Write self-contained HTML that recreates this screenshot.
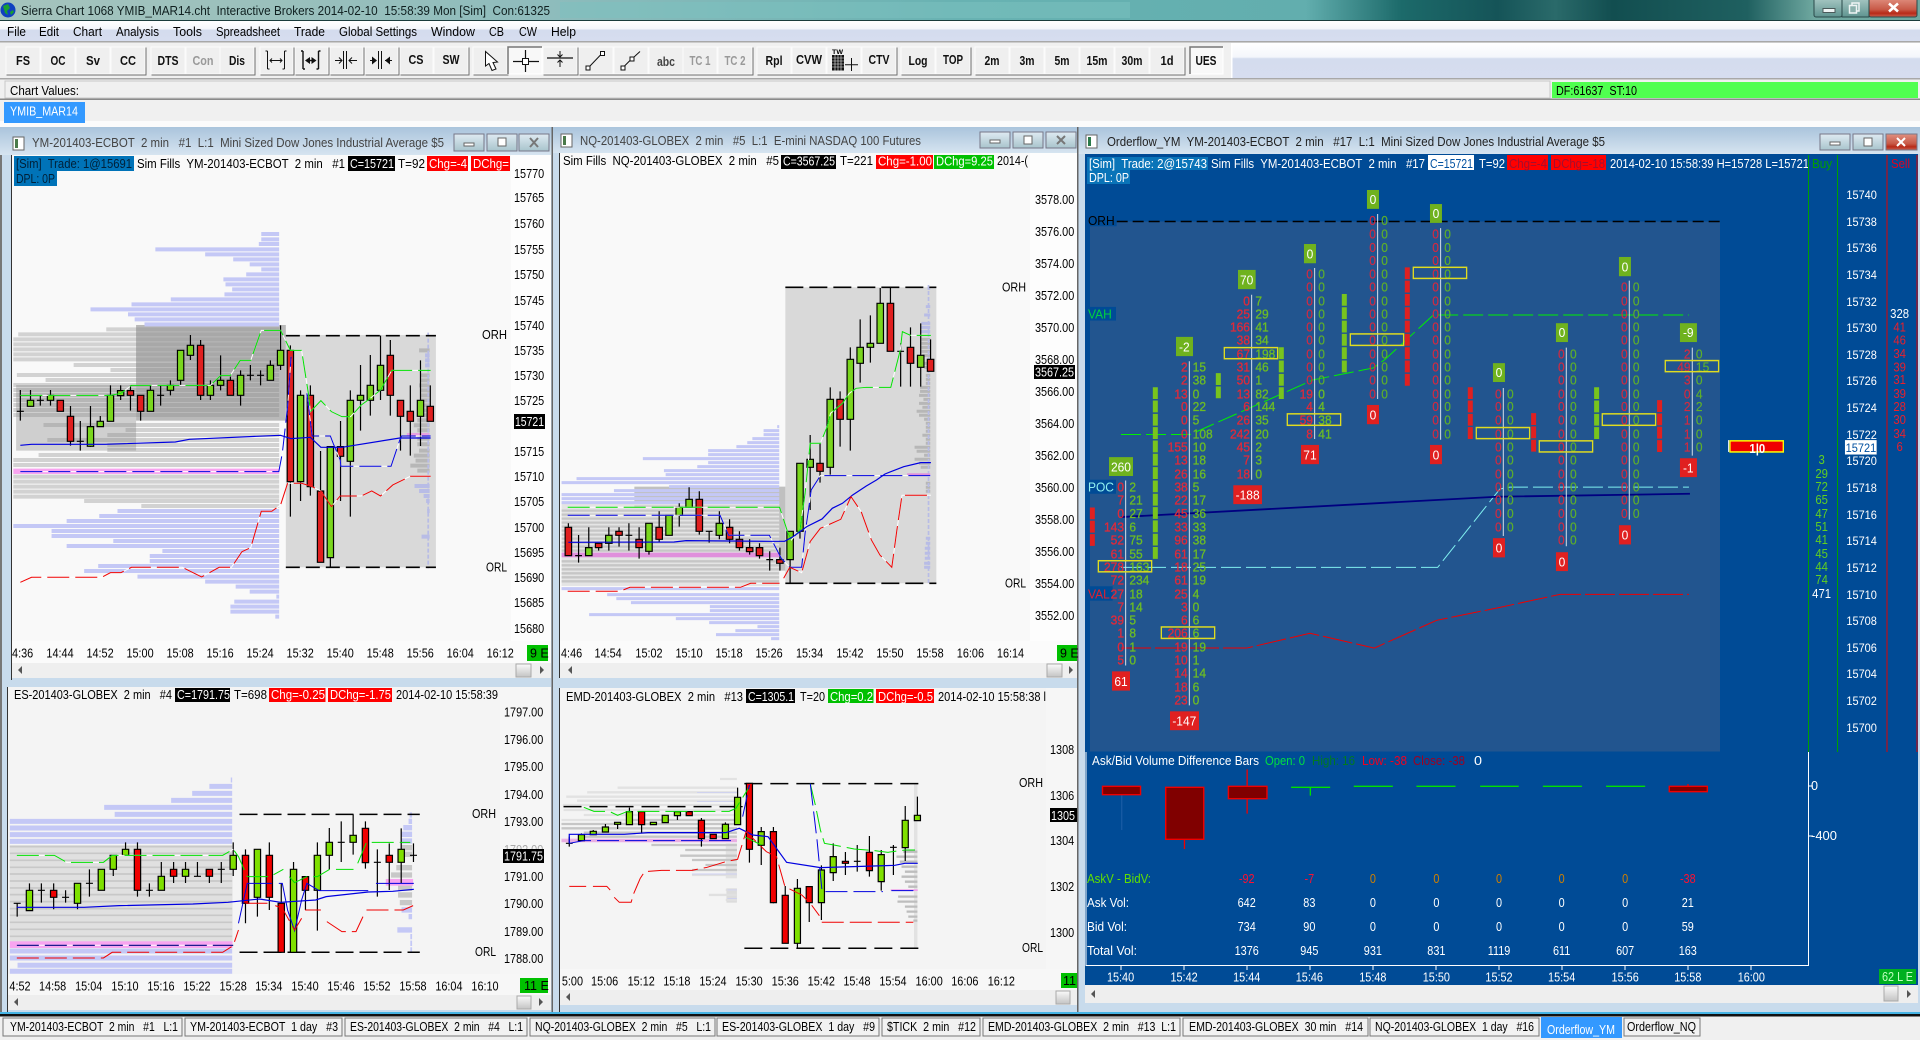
<!DOCTYPE html>
<html lang="en"><head><meta charset="utf-8"><title>Sierra Chart</title>
<style>
html,body{margin:0;padding:0;width:1920px;height:1040px;overflow:hidden;background:#e8eef6}
svg{display:block;font-family:"Liberation Sans",Arial,sans-serif}
text{white-space:pre;font-size:12.5px;fill:#000}
.n{vector-effect:non-scaling-stroke;fill:none}
.c{vector-effect:non-scaling-stroke;stroke:#000;stroke-width:1.2}
.m{text-anchor:middle}
.b text,.b{font-weight:bold;text-anchor:middle;font-size:12.5px;fill:#111}
.w{fill:#fff}
.f text{font-size:36px}
.fr text{fill:#e02a3a;stroke:#e02a3a;stroke-width:.9px;text-anchor:end}
.fg text{fill:#6cbc24;stroke:#6cbc24;stroke-width:.9px;text-anchor:start}
.fz text{fill:#d42a40;stroke:#d42a40;stroke-width:.5px}
.fy text{fill:#5eb02a;stroke:#5eb02a;stroke-width:.5px}
.d text{fill:#fff;font-size:36px;text-anchor:middle}
.ax text{fill:#fff;font-size:33px;text-anchor:middle}
.bt{filter:drop-shadow(1px 1px 0 #6e6e6e)}
</style></head><body>
<svg width="1920" height="1040" viewBox="0 0 1920 1040" xmlns="http://www.w3.org/2000/svg">
<defs>
<linearGradient id="tb" x1="0" x2="1" y1="0" y2="0"><stop offset="0" stop-color="#a5c4bd"/><stop offset=".28" stop-color="#8fbcbc"/><stop offset=".5" stop-color="#68b2b2"/><stop offset=".68" stop-color="#62aeae"/><stop offset=".73" stop-color="#1c6a6a"/><stop offset=".78" stop-color="#155458"/><stop offset=".81" stop-color="#2a6a6a"/><stop offset=".84" stop-color="#124e50"/><stop offset=".91" stop-color="#1f6060"/><stop offset=".945" stop-color="#6fa8a0"/><stop offset="1" stop-color="#6fa8a0"/></linearGradient>
<linearGradient id="mb" x1="0" x2="0" y1="0" y2="1"><stop offset="0" stop-color="#fff"/><stop offset=".4" stop-color="#f4f6fb"/><stop offset=".45" stop-color="#d4dcee"/><stop offset="1" stop-color="#d6ddef"/></linearGradient>
<linearGradient id="wt" x1="0" x2="0" y1="0" y2="1"><stop offset="0" stop-color="#aac4dc"/><stop offset="1" stop-color="#d6e4f0"/></linearGradient>
<linearGradient id="th" x1="0" x2="0" y1="0" y2="1"><stop offset="0" stop-color="#fafafa"/><stop offset="1" stop-color="#c4c4c4"/></linearGradient>
<linearGradient id="cl" x1="0" x2="0" y1="0" y2="1"><stop offset="0" stop-color="#e09080"/><stop offset=".6" stop-color="#c85a48"/><stop offset=".8" stop-color="#b82a18"/><stop offset="1" stop-color="#c86050"/></linearGradient>
<linearGradient id="wb" x1="0" x2="0" y1="0" y2="1"><stop offset="0" stop-color="#dfeaf2"/><stop offset="1" stop-color="#a8c4cc"/></linearGradient>
<linearGradient id="wg" x1="0" x2="0" y1="0" y2="1"><stop offset="0" stop-color="#a8c8c4"/><stop offset="1" stop-color="#5f9490"/></linearGradient>
</defs>

<!-- Base -->
<rect width="1920" height="1040" fill="#f0f0f0"/>
<rect width="1920" height="20" fill="url(#tb)"/>
<rect x="560" y="2" width="570" height="16" fill="#7cc2c0" opacity=".5"/>
<rect y="20" width="1920" height="1.2" fill="#1a3c3c"/>
<circle cx="8" cy="10" r="7.5" fill="#1040c0"/><path d="M3 6l5-2 2 4-3 3 1 4-3-2zM10 12l3-2 1 2-3 3z" fill="#18a030"/>
<text x="21" y="15" textLength="529" lengthAdjust="spacingAndGlyphs" style="fill:#102020">Sierra Chart 1068 YMIB_MAR14.cht  Interactive Brokers 2014-02-10  15:58:39 Mon [Sim]  Con:61325</text>
<g stroke="#2a4a4a"><rect x="1814" y="-2" width="28" height="19" rx="2" fill="url(#wg)"/><rect x="1842" y="-2" width="27" height="19" fill="url(#wg)"/><rect x="1869" y="-2" width="48" height="19" rx="2" fill="url(#cl)"/></g>
<rect x="1823" y="8.5" width="12" height="4" fill="#eef4f4" stroke="#4a5a5a"/><rect x="1852" y="3" width="7" height="8" fill="none" stroke="#eef4f4" stroke-width="1.5"/><rect x="1849.5" y="5.5" width="7" height="7.5" fill="#8ab0ac" stroke="#eef4f4" stroke-width="1.5"/><path d="M1889 3.5l9 8m0-8l-9 8" stroke="#fff" stroke-width="2.6"/>

<!-- Menu -->
<rect y="21" width="1920" height="20" fill="url(#mb)"/>
<rect y="41" width="1920" height="1.5" fill="#a8a8a8"/>
<g>
<text x="7" y="36" textLength="19" lengthAdjust="spacingAndGlyphs">File</text><text x="39" y="36" textLength="20" lengthAdjust="spacingAndGlyphs">Edit</text><text x="73" y="36" textLength="29" lengthAdjust="spacingAndGlyphs">Chart</text><text x="116" y="36" textLength="43" lengthAdjust="spacingAndGlyphs">Analysis</text><text x="173" y="36" textLength="29" lengthAdjust="spacingAndGlyphs">Tools</text><text x="216" y="36" textLength="64" lengthAdjust="spacingAndGlyphs">Spreadsheet</text><text x="294" y="36" textLength="31" lengthAdjust="spacingAndGlyphs">Trade</text><text x="339" y="36" textLength="78" lengthAdjust="spacingAndGlyphs">Global Settings</text><text x="431" y="36" textLength="44" lengthAdjust="spacingAndGlyphs">Window</text><text x="489" y="36" textLength="15" lengthAdjust="spacingAndGlyphs">CB</text><text x="519" y="36" textLength="18" lengthAdjust="spacingAndGlyphs">CW</text><text x="551" y="36" textLength="25" lengthAdjust="spacingAndGlyphs">Help</text>
</g>

<!-- Toolbar -->
<rect y="43" width="1920" height="35" fill="url(#mb)"/>
<rect x="0" y="43" width="1231" height="35" fill="#f0f0f0"/>
<rect x="1231" y="43" width="1.5" height="35" fill="#fff"/>
<rect y="78" width="1920" height="1.5" fill="#a8a8a8"/>
<g class="bt" fill="#efefef" stroke="#fbfbfb">
<rect x="6" y="47" width="34" height="27"/><rect x="41" y="47" width="34" height="27"/><rect x="76" y="47" width="34" height="27"/><rect x="111" y="47" width="34" height="27"/>
<rect x="151" y="47" width="34" height="27"/><rect x="186" y="47" width="34" height="27"/><rect x="220" y="47" width="34" height="27"/>
<rect x="260" y="47" width="33" height="27"/><rect x="295" y="47" width="33" height="27"/><rect x="330" y="47" width="33" height="27"/><rect x="365" y="47" width="33" height="27"/><rect x="400" y="47" width="33" height="27"/><rect x="434" y="47" width="34" height="27"/>
<rect x="473" y="47" width="34" height="27"/><rect x="543" y="47" width="34" height="27"/><rect x="579" y="47" width="34" height="27"/><rect x="614" y="47" width="34" height="27"/><rect x="649" y="47" width="34" height="27"/><rect x="683" y="47" width="34" height="27"/><rect x="718" y="47" width="34" height="27"/>
<rect x="757" y="47" width="34" height="27"/><rect x="792" y="47" width="34" height="27"/><rect x="827" y="47" width="34" height="27"/><rect x="862" y="47" width="34" height="27"/><rect x="901" y="47" width="34" height="27"/><rect x="936" y="47" width="34" height="27"/>
<rect x="975" y="47" width="34" height="27"/><rect x="1010" y="47" width="34" height="27"/><rect x="1045" y="47" width="34" height="27"/><rect x="1080" y="47" width="34" height="27"/><rect x="1115" y="47" width="34" height="27"/><rect x="1150" y="47" width="34" height="27"/>
</g>
<rect x="508" y="47" width="34" height="27" fill="#f8f8f8" stroke="#fff"/><path d="M508 74V47H542" fill="none" stroke="#777" stroke-width="1.5"/>
<rect x="1190" y="47" width="33" height="27" fill="#f8f8f8" stroke="#fff"/><path d="M1190 74V47H1223" fill="none" stroke="#777" stroke-width="1.5"/>
<g class="b">
<text x="23" y="65" textLength="14" lengthAdjust="spacingAndGlyphs">FS</text><text x="58" y="65" textLength="15" lengthAdjust="spacingAndGlyphs">OC</text><text x="93" y="65" textLength="14" lengthAdjust="spacingAndGlyphs">Sv</text><text x="128" y="65" textLength="16" lengthAdjust="spacingAndGlyphs">CC</text><text x="168" y="65" textLength="21" lengthAdjust="spacingAndGlyphs">DTS</text><text x="203" y="65" textLength="21" lengthAdjust="spacingAndGlyphs" style="fill:#999">Con</text><text x="237" y="65" textLength="16" lengthAdjust="spacingAndGlyphs">Dis</text><text x="416" y="64" textLength="15" lengthAdjust="spacingAndGlyphs">CS</text><text x="451" y="64" textLength="17" lengthAdjust="spacingAndGlyphs">SW</text><text x="666" y="66" textLength="18" lengthAdjust="spacingAndGlyphs" style="fill:#444">abc</text><text x="700" y="65" textLength="21" lengthAdjust="spacingAndGlyphs" style="fill:#999">TC 1</text><text x="735" y="65" textLength="21" lengthAdjust="spacingAndGlyphs" style="fill:#999">TC 2</text><text x="774" y="65" textLength="17" lengthAdjust="spacingAndGlyphs">Rpl</text><text x="809" y="64" textLength="26" lengthAdjust="spacingAndGlyphs">CVW</text><text x="879" y="64" textLength="21" lengthAdjust="spacingAndGlyphs">CTV</text><text x="918" y="65" textLength="19" lengthAdjust="spacingAndGlyphs">Log</text><text x="953" y="64" textLength="20" lengthAdjust="spacingAndGlyphs">TOP</text><text x="992" y="65" textLength="15" lengthAdjust="spacingAndGlyphs">2m</text><text x="1027" y="65" textLength="15" lengthAdjust="spacingAndGlyphs">3m</text><text x="1062" y="65" textLength="15" lengthAdjust="spacingAndGlyphs">5m</text><text x="1097" y="65" textLength="21" lengthAdjust="spacingAndGlyphs">15m</text><text x="1132" y="65" textLength="21" lengthAdjust="spacingAndGlyphs">30m</text><text x="1167" y="65" textLength="13" lengthAdjust="spacingAndGlyphs">1d</text><text x="1206" y="65" textLength="21" lengthAdjust="spacingAndGlyphs">UES</text>
</g>
<g fill="none" stroke="#111" stroke-width="1">
<path d="M267.5 51V69M265.5 51h2M267.5 69h2M284.5 51V69M284.5 51h2M282.5 69h2M270 60.5H282M272 58.5l-2 2 2 2M280 58.5l2 2-2 2"/>
<path d="M303 51V69M301 51h2M303 69h2M318.5 51V69M318.5 51h2M316.5 69h2" stroke-width="1.4"/><path d="M305 60.5l5-3.5v7zM316.5 60.5l-5-3.5v7z" fill="#111" stroke="none"/><path d="M309 60.5h4" stroke-width="1.4"/>
<path d="M343.5 51V69M346.5 51V69M335 60.5H342M339 57.5l3 3-3 3M349 60.5H357M352 57.5l-3 3 3 3"/>
<path d="M378.5 51V69M381.5 51V69M370 60.5H373M385 60.5H392"/><path d="M372 56.5l5 4-5 4zM390 56.5l-5 4 5 4z" fill="#111" stroke="none"/>
<path d="M485.5 51.5V66L489 63.5 492 70.5 496 69 493 62.5 497.5 62Z" fill="#fff"/>
<path d="M525.5 50V72M513 61.5H539" stroke-width="1.2"/><rect x="522.5" y="58.5" width="6" height="6" fill="#fff"/>
<path d="M547 58H573" stroke-width="1.2"/><path d="M560 51V56.5M557.5 54.5l2.5 2.5 2.5-2.5M560 60V67M557.5 62.5l2.5-2.5 2.5 2.5"/>
<path d="M590 66L600.5 55"/><rect x="586" y="66" width="4" height="4" fill="#fff"/><rect x="600.5" y="51.5" width="4" height="4" fill="#fff"/>
<path d="M624.5 66L630 60.5M633.5 57.5L640 51.5"/><rect x="621" y="66" width="4" height="4" fill="#fff"/><rect x="630" y="57" width="4" height="4" fill="#fff"/>
</g>
<rect x="832" y="55" width="12" height="15.5" fill="#111"/>
<path d="M835 55v15.5M838 55v15.5M841 55v15.5M832 58h12M832 61h12M832 64h12M832 67h12" stroke="#eee" stroke-width=".6"/>
<path d="M845 64.7H858M851.5 58V71" stroke="#111" fill="none"/>
<text x="832" y="54" style="font-size:6.5px;font-weight:bold" textLength="11" lengthAdjust="spacingAndGlyphs">TW</text>

<!-- Status -->
<rect x="5" y="81" width="1545" height="17" fill="#f0f0f0" stroke="#c8c8c8"/>
<text x="10" y="95" textLength="69" lengthAdjust="spacingAndGlyphs">Chart Values:</text>
<rect x="1552" y="82" width="366" height="16" fill="#50ff50"/>
<text x="1556" y="95" textLength="81" lengthAdjust="spacingAndGlyphs">DF:61637  ST:10</text>
<rect y="98.5" width="1920" height="1.5" fill="#8a8a8a"/>
<rect y="100" width="1920" height="22" fill="#f0f0f0"/>
<rect y="121" width="1920" height="6" fill="#fbfbfb"/>
<rect x="4" y="102" width="81" height="21" fill="#3399ff"/>
<text x="10" y="115.5" textLength="68" lengthAdjust="spacingAndGlyphs" class="w">YMIB_MAR14</text>

<!-- Window frames -->
<rect y="127" width="1920" height="890" fill="#c8dbec"/>
<rect x="0" y="127" width="2" height="890" fill="#777"/>
<rect x="0" y="127" width="552" height="28" fill="url(#wt)"/>
<rect x="553" y="127" width="524" height="26" fill="url(#wt)"/>
<rect x="1078" y="127" width="842" height="27" fill="url(#wt)"/>
<rect x="551.5" y="127" width="1.5" height="890" fill="#666"/>
<rect x="1077" y="127" width="1.5" height="890" fill="#666"/>

<rect x="13" y="137" width="11" height="13" fill="#fff" stroke="#666"/><rect x="15" y="139" width="3" height="9" fill="#4a7a4a"/>
<text x="32" y="147" textLength="412" lengthAdjust="spacingAndGlyphs" style="fill:#444">YM-201403-ECBOT  2 min   #1  L:1  Mini Sized Dow Jones Industrial Average $5</text>
<g fill="url(#wb)" stroke="#778"><rect x="454" y="134" width="30" height="17"/><rect x="487" y="134" width="30" height="17"/><rect x="519" y="134" width="30" height="17"/></g>
<rect x="464" y="143" width="10" height="3" fill="#fff" stroke="#666"/><rect x="498" y="138" width="8" height="8" fill="#fff" stroke="#666"/><path d="M530 138l8 9m0-9l-8 9" stroke="#777" stroke-width="2"/>

<rect x="561" y="134" width="11" height="13" fill="#fff" stroke="#666"/><rect x="563" y="136" width="3" height="9" fill="#4a7a4a"/>
<text x="580" y="145" textLength="341" lengthAdjust="spacingAndGlyphs" style="fill:#444">NQ-201403-GLOBEX  2 min   #5  L:1  E-mini NASDAQ 100 Futures</text>
<g fill="url(#wb)" stroke="#778"><rect x="980" y="132" width="30" height="16"/><rect x="1013" y="132" width="30" height="16"/><rect x="1046" y="132" width="30" height="16"/></g>
<rect x="990" y="140" width="10" height="3" fill="#fff" stroke="#666"/><rect x="1024" y="136" width="8" height="8" fill="#fff" stroke="#666"/><path d="M1057 136l8 8m0-8l-8 8" stroke="#777" stroke-width="2"/>

<rect x="1086" y="135" width="11" height="13" fill="#fff" stroke="#666"/><rect x="1088" y="137" width="3" height="9" fill="#2a7a4a"/>
<text x="1107" y="146" textLength="498" lengthAdjust="spacingAndGlyphs" style="fill:#222">Orderflow_YM  YM-201403-ECBOT  2 min   #17  L:1  Mini Sized Dow Jones Industrial Average $5</text>
<g stroke="#778"><rect x="1820" y="134" width="30" height="16" fill="url(#wb)"/><rect x="1853" y="134" width="30" height="16" fill="url(#wb)"/><rect x="1886" y="134" width="31" height="16" fill="url(#cl)"/></g>
<rect x="1830" y="142" width="10" height="3" fill="#fff" stroke="#666"/><rect x="1864" y="138" width="8" height="8" fill="#fff" stroke="#666"/><path d="M1897 138l8 8m0-8l-8 8" stroke="#fff" stroke-width="2"/>

<!-- CHART 1 -->
<rect x="11" y="155" width="1" height="525" fill="#333"/>
<rect x="12" y="155" width="539" height="486" fill="#f9f9f9"/>
<rect x="511" y="155" width="40" height="486" fill="#fdfdfd"/>
<rect x="12" y="641" width="539" height="22" fill="#fbfbfb"/>
<rect x="12" y="663" width="539" height="15" fill="#efefef"/>
<rect x="516" y="664" width="15" height="13" fill="url(#th)" stroke="#aaa"/>
<path d="M22 666l-4 4 4 4zM540 666l4 4-4 4z" fill="#555"/>
<rect x="14" y="156" width="120" height="15" fill="#0073b8"/><rect x="14" y="171" width="43" height="15" fill="#0073b8"/>
<text x="16" y="168" textLength="116" lengthAdjust="spacingAndGlyphs" style="fill:#002038">[Sim]  Trade: 1@15691</text>
<text x="16" y="183" textLength="39" lengthAdjust="spacingAndGlyphs" style="fill:#002038">DPL: 0P</text>
<text x="137" y="168" textLength="208" lengthAdjust="spacingAndGlyphs">Sim Fills  YM-201403-ECBOT  2 min   #1</text>
<rect x="348" y="156" width="47" height="15" fill="#000"/><text x="350" y="168" textLength="44" lengthAdjust="spacingAndGlyphs" class="w">C=15721</text>
<text x="398" y="168" textLength="27" lengthAdjust="spacingAndGlyphs">T=92</text>
<rect x="427" y="156" width="41" height="15" fill="#f00"/><text x="429" y="168" textLength="38" lengthAdjust="spacingAndGlyphs" class="w">Chg=-4</text>
<rect x="471" y="156" width="39" height="15" fill="#f00"/><text x="473" y="168" textLength="36" lengthAdjust="spacingAndGlyphs" class="w">DChg=</text>

<g transform="translate(0,200) scale(.3507,.3333)">
<rect x="815" y="405" width="428" height="697" fill="#d9d9d9"/>
<rect x="388" y="375" width="427" height="287" fill="#b9b9b9"/>
<rect x="46" y="555" width="342" height="197" fill="#cfcfcf"/>
<path stroke="#c4c8f6" stroke-width="12" d="M745 102H796M745 118H796M738 132H796M443 148H796M585 163H796M665 178H796M712 193H796M745 208H796M702 223H796M637 238H796M643 253H796M662 268H796M640 283H796M487 298H796M375 313H796M258 328H796M365 343H796M384 358H796M412 373H796M335 933H796M283 948H796M190 963H796M38 978H796M147 993H796M147 1008H796M323 1023H796M190 1038H796M463 1053H796M427 1068H796M427 1083H796M280 1098H796M240 1113H796M392 1130H796M585 1145H796M672 1160H796M712 1175H796M788 1190H796M668 1205H796M657 1220H796M657 1235H796M785 1250H796"/>
<path stroke="#888" stroke-opacity=".34" stroke-width="12" d="M303 388H796M52 403H796M38 418H796M38 433H796M38 448H796M38 463H796M38 478H796M210 495H796M315 510H796M48 525H796M130 540H796M38 555H796M38 570H796M38 585H796M38 600H796M38 615H796M38 630H796M38 645H796M124 675H796M358 690H796M306 705H796M135 720H796M306 735H796M306 750H796M110 765H796M38 780H796M38 795H796M38 830H796M38 845H796M38 860H796M38 875H796M38 890H796M240 903H796M403 918H796"/>
<rect x="38" y="806" width="758" height="16" fill="#f8a4f0"/>
<path stroke="#9a9a9a" stroke-opacity=".55" stroke-width="12" d="M1195 451H1225M1200 526H1225M1200 541H1225M1195 556H1225M1198 571H1225M1200 586H1225M1198 601H1225M1195 616H1225M1195 631H1225M1198 646H1225M1190 661H1225M1180 676H1225M1190 691H1225M1190 716H1225M1190 733H1225M1195 752H1225M1180 767H1225M1185 782H1225M1170 797H1225M1190 812H1225"/>
<path stroke="#b8bce6" stroke-width="12" d="M1212 466H1225M1212 481H1225M1212 496H1225M1182 858H1225M1195 873H1225M1208 888H1225M1215 903H1225M1218 933H1225M1202 1010H1225"/>
<rect x="1160" y="699" width="65" height="9" fill="#e8a0e0"/>
<path stroke="#b8bce6" stroke-width="5" stroke-dasharray="12 6" d="M1221 398V1105"/>
<path class="n" stroke="#000" stroke-width="1.6" stroke-dasharray="14 6" d="M815 407H1243M815 1102H1243"/>
<path class="n" stroke="#000" stroke-width="1.2" d="M58 570V662M48 634H68M87 570V620M115 587V617M105 601H125M144 570V617M172 601V634M201 618V737M229 663V752M219 724H239M258 618V741M286 648V680M315 556V664M344 556V600M372 556V632M401 586V662M429 556V634M458 556V617M448 586H468M486 541V586M515 451V556M543 405V480M572 420V600M600 541V600M629 466V571M657 530V586M686 511V617M714 495V541M704 526H724M743 511V556M733 526H753M771 481V541M800 376V510M828 436V950M857 571V903M885 556V887M914 753V1087M942 740V1102M971 663V903M999 571V950M1028 495V692M1056 465V647M1085 407V600M1113 420V647M1142 601V752M1170 556V767M1199 481V738M1227 556V664"/>
<path class="c" d="M78 601h18v18h-18zM135 586h18v15h-18zM249 680h18v59h-18zM277 664h18v16h-18zM306 586h18v78h-18zM335 572h18v15h-18zM420 571h18v63h-18zM477 556h18v15h-18zM506 451h18v90h-18zM534 436h18v30h-18zM591 556h18v30h-18zM620 541h18v15h-18zM677 526h18v60h-18zM762 496h18v45h-18zM791 451h18v45h-18zM848 586h18v259h-18zM933 740h18v333h-18zM990 601h18v183h-18zM1019 586h18v15h-18zM1047 556h18v45h-18zM1076 496h18v75h-18zM1190 601h18v48h-18z" style="fill:#7ad61e"/>
<path class="c" d="M163 601h18v33h-18zM192 649h18v75h-18zM363 572h18v14h-18zM392 586h18v48h-18zM563 436h18v150h-18zM648 541h18v45h-18zM819 451h18v394h-18zM876 586h18v274h-18zM905 873h18v214h-18zM962 740h18v29h-18zM1104 466h18v120h-18zM1133 601h18v48h-18zM1161 634h18v30h-18zM1218 619h18v45h-18z" style="fill:#e02020"/>
<path class="n" stroke="#fff" stroke-width="1" d="M58 586H315L345 580 375 556H600L630 526H657L685 481H715L745 391H800L828 451H860L880 585 885 635 915 602 945 635 975 650H1000L1030 615 1050 600 1085 570 1117 511H1228M58 815H795L805 760 820 620 830 470M875 580L890 708H942L950 730 970 780 972 799H1115L1140 720 1145 708H1228M58 1147L90 1132H290L315 1118H345L375 1102H520L575 1131 625 1102H660L690 1055 715 1043 745 934H775L800 915 820 850H860L890 860 915 873 945 920 970 888H1030L1060 873 1085 888 1120 855 1170 829H1228"/>
<path class="n" stroke="#00e000" stroke-width="1" stroke-dasharray="22 6" d="M58 586H315L345 580 375 556H600L630 526H657L685 481H715L745 391H800L828 451H860L880 585 885 635 915 602 945 635 975 650H1000L1030 615 1050 600 1085 570 1117 511H1228"/>
<path class="n" stroke="#0000e0" stroke-width="1.2" d="M58 736L90 733H300L500 726 540 718 730 709 800 706 830 716 885 712 915 742H975L1140 714H1228"/>
<path class="n" stroke="#0000e0" stroke-width="1" stroke-dasharray="22 6" d="M58 815H795L805 760 820 620 830 470M875 580L890 708H942L950 730 970 780 972 799H1115L1140 720 1145 708H1228"/>
<path class="n" stroke="#f00000" stroke-width="1" stroke-dasharray="22 6" d="M58 1147L90 1132H290L315 1118H345L375 1102H520L575 1131 625 1102H660L690 1055 715 1043 745 934H775L800 915 820 850H860L890 860 915 873 945 920 970 888H1030L1060 873 1085 888 1120 855 1170 829H1228"/>
</g>
<text x="482" y="339" textLength="25" lengthAdjust="spacingAndGlyphs">ORH</text><text x="486" y="571.5" textLength="21" lengthAdjust="spacingAndGlyphs">ORL</text>
<g transform="translate(514,0) scale(.87,1)"><text y="178">15770</text><text y="202">15765</text><text y="228">15760</text><text y="254">15755</text><text y="279">15750</text><text y="305">15745</text><text y="330">15740</text><text y="355">15735</text><text y="380">15730</text><text y="405">15725</text><text y="426">15720</text><text y="456">15715</text><text y="481">15710</text><text y="506">15705</text><text y="532">15700</text><text y="557">15695</text><text y="582">15690</text><text y="607">15685</text><text y="633">15680</text></g>
<rect x="514" y="414" width="31" height="15" fill="#000"/><text x="515" y="426" textLength="29" lengthAdjust="spacingAndGlyphs" class="w">15721</text>
<g transform="scale(.87,1)" class="m"><text x="26" y="657.5" class="m">4:36</text><text x="69" y="657.5" class="m">14:44</text><text x="115" y="657.5" class="m">14:52</text><text x="161" y="657.5" class="m">15:00</text><text x="207" y="657.5" class="m">15:08</text><text x="253" y="657.5" class="m">15:16</text><text x="299" y="657.5" class="m">15:24</text><text x="345" y="657.5" class="m">15:32</text><text x="391" y="657.5" class="m">15:40</text><text x="437" y="657.5" class="m">15:48</text><text x="483" y="657.5" class="m">15:56</text><text x="529" y="657.5" class="m">16:04</text><text x="575" y="657.5" class="m">16:12</text></g>
<rect x="527" y="645" width="21" height="16" fill="#00c000"/><text x="530" y="657.5">9 E</text>

<!-- CHART 2 -->
<rect x="559" y="153" width="1" height="525" fill="#333"/>
<rect x="560" y="153" width="517" height="488" fill="#f9f9f9"/>
<rect x="1030" y="153" width="47" height="488" fill="#fdfdfd"/>
<rect x="560" y="641" width="517" height="22" fill="#fbfbfb"/>
<rect x="560" y="663" width="517" height="15" fill="#efefef"/>
<rect x="1047" y="664" width="15" height="13" fill="url(#th)" stroke="#aaa"/>
<path d="M572 666l-4 4 4 4zM1069 666l4 4-4 4z" fill="#555"/>
<text x="563" y="165" textLength="216" lengthAdjust="spacingAndGlyphs">Sim Fills  NQ-201403-GLOBEX  2 min   #5</text>
<rect x="781" y="155" width="55" height="14" fill="#000"/><text x="783" y="165.5" textLength="52" lengthAdjust="spacingAndGlyphs" class="w">C=3567.25</text>
<text x="840" y="165" textLength="33" lengthAdjust="spacingAndGlyphs">T=221</text>
<rect x="876" y="155" width="57" height="14" fill="#f00"/><text x="878" y="165.5" textLength="54" lengthAdjust="spacingAndGlyphs" class="w">Chg=-1.00</text>
<rect x="934" y="155" width="60" height="14" fill="#00c000"/><text x="936" y="165.5" textLength="57" lengthAdjust="spacingAndGlyphs" class="w">DChg=9.25</text>
<text x="997" y="165" textLength="31" lengthAdjust="spacingAndGlyphs">2014-(</text>

<g transform="translate(550,200) scale(.3401,.3333)">
<rect x="692" y="262" width="444" height="888" fill="#d9d9d9"/>
<rect x="248" y="860" width="444" height="252" fill="#c0c0c0"/>
<rect x="34" y="908" width="640" height="250" fill="#e4e4e4"/>
<path stroke="#c4c8f6" stroke-width="9" d="M668 680H674M628 692H674M628 704H674M595 716H674M580 728H674M548 740H674M465 752H674M465 764H674M273 776H674M465 788H674M433 800H674M335 812H674M340 824H674M78 836H674M34 848H674M350 860H674M188 872H674M34 884H674M34 896H674M34 908H674M34 1166H674M168 1184H674M195 1196H674M238 1208H674M470 1220H674M470 1232H674M115 1244H674M370 1256H674M468 1268H674M610 1280H674M545 1292H674M488 1304H674M650 1316H674"/>
<path stroke="#888" stroke-opacity=".32" stroke-width="7" d="M248 920H674M34 932H674M34 944H674M34 956H674M34 968H674M34 980H674M34 992H674M34 1004H674M34 1016H674M34 1028H674M34 1040H674M34 1052H674M34 1084H674M34 1096H674M34 1108H674M34 1120H674M34 1132H674M34 1144H674"/>
<rect x="34" y="1058" width="640" height="14" fill="#e090dc"/>
<path stroke="#9a9a9a" stroke-opacity=".55" stroke-width="9" d="M1092 418H1118M1092 430H1118M1092 442H1118M1092 454H1118M1095 466H1118M1100 490H1118M1100 502H1118M1105 526H1118M1105 538H1118M1105 550H1118M1088 562H1118M1088 574H1118M1085 586H1118M1098 598H1118M1085 610H1118M1095 622H1118M1078 634H1118M1085 646H1118M1100 658H1118M1105 670H1118M1105 682H1118M1105 694H1118M1095 706H1118M1105 718H1118M1105 730H1118M1072 742H1118M1078 754H1118M1100 766H1118M1072 778H1118M1085 790H1118M1090 802H1118M1105 850H1118M1105 862H1118M1105 874H1118"/>
<path stroke="#b8bce6" stroke-width="9" d="M1110 265H1118M1105 320H1118M1100 345H1118M1092 370H1118M1090 382H1118M1090 395H1118M1105 1015H1118M1105 1030H1118M1102 1045H1118M1102 1060H1118M1102 1075H1118M1100 1090H1118M1100 1102H1118"/>
<path stroke="#b8bce6" stroke-width="5" stroke-dasharray="12 6" d="M1113 255V1155"/>
<rect x="1050" y="820" width="68" height="8" fill="#e090dc"/>
<path class="n" stroke="#000" stroke-width="1.6" stroke-dasharray="18 6" d="M692 262H1136M692 1150H1136"/>
<path class="n" stroke="#000" stroke-width="1.2" d="M54 970V1067M84 1005V1088M74 1067H94M114 982V1067M143 1030V1052M173 982V1052M203 982V1040M232 970V1052M222 1006H242M262 982V1076M291 970V1064M321 934V1026M350 946V1006M380 910V980M409 862V922M439 874V1004M468 994V1028M458 994H478M498 934V1018M528 958V1030M557 994V1052M587 1018V1064M616 1030V1076M646 1054V1112M636 1079H656M676 1043V1112M706 994V1150M735 790V1016M765 705V930M794 730V848M824 562V824M853 574V740M883 442V752M912 358V548M942 346V488M971 264V430M1001 264V454M1031 430V560M1021 454H1041M1060 382V560M1090 370V560M1119 418V514"/>
<path class="c" d="M104.5 1043h19v24h-19zM163.5 1006h19v24h-19zM281.5 970h19v84h-19zM340.5 946h19v60h-19zM370.5 922h19v24h-19zM399.5 898h19v24h-19zM488.5 970h19v36h-19zM696.5 994h19v85h-19zM725.5 790h19v204h-19zM755.5 778h19v24h-19zM814.5 598h19v204h-19zM873.5 478h19v180h-19zM902.5 442h19v48h-19zM932.5 430h19v12h-19zM961.5 310h19v120h-19zM1080.5 466h19v36h-19z" style="fill:#7ad61e"/>
<path class="c" d="M44.5 982h19v85h-19zM133.5 1030h19v13h-19zM193.5 994h19v12h-19zM252.5 1018h19v25h-19zM311.5 982h19v36h-19zM429.5 898h19v96h-19zM518.5 982h19v36h-19zM547.5 1018h19v25h-19zM577.5 1043h19v12h-19zM606.5 1043h19v24h-19zM666.5 1079h19v11h-19zM784.5 790h19v24h-19zM843.5 598h19v60h-19zM991.5 310h19v144h-19zM1050.5 442h19v48h-19zM1109.5 478h19v36h-19z" style="fill:#e02020"/>
<path class="n" stroke="#fff" stroke-width="1" d="M52 922H675L700 1000 710 1020 735 990 750 880 765 730H795L815 680 825 640 860 610 880 580 900 565 930 562H1002L1030 450 1036 395 1060 406H1120M52 946H500L525 1006H645L680 1075 705 1102H740L750 1000 760 930 768 870 795 827H1120M52 1174H205L235 1162H560L590 1150H675M687 1135L705 1102 740 1118 765 1025 795 985 855 958 885 890 915 935 945 1020 970 1065 1005 1102 1020 990 1035 886H1120"/>
<path class="n" stroke="#00e000" stroke-width="1" stroke-dasharray="22 6" d="M52 922H675L700 1000 710 1020 735 990 750 880 765 730H795L815 680 825 640 860 610 880 580 900 565 930 562H1002L1030 450 1036 395 1060 406H1120"/>
<path class="n" stroke="#0000e0" stroke-width="1" stroke-dasharray="22 6" d="M52 946H500L525 1006H645L680 1075 705 1102H740L750 1000 760 930 768 870 795 827H1120"/>
<path class="n" stroke="#0000e0" stroke-width="1.2" d="M54 1027L365 1026 400 1022 650 1024H690L715 1010 755 980 800 957 830 925 860 910 890 885 930 858 960 840 985 822 1040 800 1090 788H1120"/>
<path class="n" stroke="#f00000" stroke-width="1" stroke-dasharray="22 6" d="M52 1174H205L235 1162H560L590 1150H675M687 1135L705 1102 740 1118 765 1025 795 985 855 958 885 890 915 935 945 1020 970 1065 1005 1102 1020 990 1035 886H1120"/>
</g>
<text x="1002" y="291.5" textLength="24" lengthAdjust="spacingAndGlyphs">ORH</text><text x="1005" y="587.5" textLength="21" lengthAdjust="spacingAndGlyphs">ORL</text>
<g transform="translate(1035,0) scale(.87,1)"><text y="204">3578.00</text><text y="236">3576.00</text><text y="268">3574.00</text><text y="300">3572.00</text><text y="332">3570.00</text><text y="364">3568.00</text><text y="396">3566.00</text><text y="428">3564.00</text><text y="460">3562.00</text><text y="492">3560.00</text><text y="524">3558.00</text><text y="556">3556.00</text><text y="588">3554.00</text><text y="620">3552.00</text></g>
<rect x="1034" y="365" width="41" height="14" fill="#000"/><text x="1035" y="376.5" textLength="39" lengthAdjust="spacingAndGlyphs" class="w">3567.25</text>
<g transform="scale(.87,1)" class="m"><text x="657" y="657.5" class="m">4:46</text><text x="699" y="657.5" class="m">14:54</text><text x="746" y="657.5" class="m">15:02</text><text x="792" y="657.5" class="m">15:10</text><text x="838" y="657.5" class="m">15:18</text><text x="884" y="657.5" class="m">15:26</text><text x="930.5" y="657.5" class="m">15:34</text><text x="977" y="657.5" class="m">15:42</text><text x="1023" y="657.5" class="m">15:50</text><text x="1069" y="657.5" class="m">15:58</text><text x="1115.4" y="657.5" class="m">16:06</text><text x="1161.5" y="657.5" class="m">16:14</text></g>
<rect x="1057" y="645" width="20" height="16" fill="#00c000"/><text x="1060" y="657.5">9 E</text>

<!-- CHART 3 -->
<rect x="7" y="687" width="1" height="328" fill="#333"/>
<rect x="8" y="687" width="543" height="287" fill="#f4f4f4"/>
<rect x="500" y="687" width="51" height="287" fill="#f6f6f6"/>
<rect x="8" y="974" width="543" height="21" fill="#f7f7f7"/>
<rect x="8" y="995" width="543" height="15" fill="#eee"/>
<rect x="517" y="996" width="14" height="13" fill="url(#th)" stroke="#aaa"/>
<path d="M18 998l-4 4 4 4zM539 998l4 4-4 4z" fill="#555"/>
<text x="14" y="699" textLength="158" lengthAdjust="spacingAndGlyphs">ES-201403-GLOBEX  2 min   #4</text>
<rect x="175" y="688" width="55" height="14" fill="#000"/><text x="177" y="699" textLength="53" lengthAdjust="spacingAndGlyphs" class="w">C=1791.75</text>
<text x="234" y="699" textLength="33" lengthAdjust="spacingAndGlyphs">T=698</text>
<rect x="269" y="688" width="56.5" height="14" fill="#f00"/><text x="271" y="699" textLength="54" lengthAdjust="spacingAndGlyphs" class="w">Chg=-0.25</text>
<rect x="328" y="688" width="64" height="14" fill="#f00"/><text x="330" y="699" textLength="61" lengthAdjust="spacingAndGlyphs" class="w">DChg=-1.75</text>
<text x="396" y="699" textLength="102" lengthAdjust="spacingAndGlyphs">2014-02-10 15:58:39</text>

<g transform="translate(0,680) scale(.3507,.3333)">
<path stroke="#c4c8f6" stroke-width="15" d="M658 300H662M597 319H662M548 340H662M488 361H662M297 382H662M327 403H662M28 424H662M28 444H662M28 464H662M28 484H662M28 813H662M28 834H662M50 856H662M28 874H662"/>
<rect x="28" y="495" width="635" height="290" fill="#e0e0e0"/>
<path stroke="#c8c8c8" stroke-width="5" d="M28 500H662M28 520H662M28 541H662M28 562H662M28 582H662M28 603H662M28 624H662M28 644H662M28 665H662M28 686H662M28 706H662M28 727H662M28 748H662M28 769H662"/>
<rect x="28" y="784" width="635" height="20" fill="#f8a4f0"/>
<path stroke="#c8c8c8" stroke-width="16" d="M1145 503H1175M1145 523H1175M1130 563H1175M1115 585H1175M1135 625H1175M1135 645H1175M1140 668H1175"/>
<path stroke="#c4c8f6" stroke-width="16" d="M1168 405H1175M1165 424H1175M1150 443H1175M1145 463H1175M1145 483H1175M1145 690H1175M1165 710H1175M1133 750H1175M1170 770H1175M1170 790H1175M1170 810H1175"/>
<rect x="1100" y="597" width="78" height="20" fill="#f8a4f0"/>
<path class="n" stroke="#000" stroke-width="1.5" stroke-dasharray="18 6" d="M683 403H1197M683 817H1197"/>
<path class="n" stroke="#000" stroke-width="1.2" d="M49 670V710M39 670H59M84 610V692M118 610V668M108 631H128M153 610V688M187 631V668M177 652H197M221 610V688M255 568V650M245 610H265M289 568V631M323 526V588M358 487V526M392 487V650M426 610V650M416 631H436M460 546V631M495 546V609M529 546V609M563 546V589M553 589H573M597 568V609M631 546V609M621 568H641M665 487V588M700 508V730M734 508V710M768 487V690M802 610V817M837 546V817M871 590V690M905 487V752M939 444V568M973 424V546M963 487H983M1007 403V524M1042 424V566M1076 508V650M1066 547H1086M1110 490V630M1144 445V610M1179 490V546M1169 526H1189"/>
<path class="c" d="M75 631h18v61h-18zM212 610h18v60h-18zM280 568h18v63h-18zM314 526h18v42h-18zM349 508h18v18h-18zM451 589h18v42h-18zM520 568h18v21h-18zM656 526h18v42h-18zM725 508h18v144h-18zM828 568h18v249h-18zM896 526h18v105h-18zM930 487h18v39h-18zM998 466h18v21h-18zM1135 508h18v39h-18z" style="fill:#7fe000"/>
<path class="c" d="M144 631h18v21h-18zM383 508h18v123h-18zM486 568h18v21h-18zM588 568h18v21h-18zM691 526h18v144h-18zM759 526h18v126h-18zM793 670h18v147h-18zM862 590h18v41h-18zM1033 445h18v103h-18zM1101 526h18v21h-18z" style="fill:#f00000"/>
<path class="n" stroke="#fff" stroke-width="1" d="M48 796H665M48 526H155L190 547H295L320 526H635L665 508"/>
<path class="n" stroke="#00e000" stroke-width="1" stroke-dasharray="22 6" d="M48 526H155L190 547H295L320 526H635L665 508 680 530 705 590H770L808 568M825 590L840 608 875 590H905L940 568M958 568H1008M1020 550L1045 487H1170"/>
<path class="n" stroke="#0000e0" stroke-width="1" d="M680 730L705 610H775M795 610H805L820 690 840 752 860 660 875 610 910 632H1050M1072 610H1180"/>
<path class="n" stroke="#0000e0" stroke-width="1.2" d="M48 682H240L340 677 550 672 650 667 740 657 800 667 900 660 930 650 1050 636 1120 634 1180 628"/>
<path class="n" stroke="#000080" stroke-width="1.2" stroke-dasharray="22 6" d="M48 796H665"/>
<path class="n" stroke="#f00000" stroke-width="1" stroke-dasharray="22 6" d="M48 834H295L320 817H635L665 797 680 750M700 670H770M785 677L805 685 840 750 860 715M870 690H915M932 725L975 755H1015L1035 710M1045 690H1150L1178 677"/>
</g>
<text x="472" y="818" textLength="24" lengthAdjust="spacingAndGlyphs">ORH</text><text x="475" y="956" textLength="21" lengthAdjust="spacingAndGlyphs">ORL</text>
<g transform="translate(504,0) scale(.87,1)"><text y="716.5">1797.00</text><text y="744">1796.00</text><text y="771">1795.00</text><text y="799">1794.00</text><text y="826">1793.00</text><text y="854" style="fill:#aaa">1792.00</text><text y="881">1791.00</text><text y="908">1790.00</text><text y="936">1789.00</text><text y="963">1788.00</text></g>
<rect x="503" y="849" width="41" height="14" fill="#000"/><text x="504" y="860.5" textLength="39" lengthAdjust="spacingAndGlyphs" class="w">1791.75</text>
<g transform="scale(.87,1)" class="m"><text x="23" y="990.5" class="m">4:52</text><text x="60.5" y="990.5" class="m">14:58</text><text x="102" y="990.5" class="m">15:04</text><text x="143.7" y="990.5" class="m">15:10</text><text x="185" y="990.5" class="m">15:16</text><text x="226.4" y="990.5" class="m">15:22</text><text x="268" y="990.5" class="m">15:28</text><text x="309" y="990.5" class="m">15:34</text><text x="350.6" y="990.5" class="m">15:40</text><text x="392" y="990.5" class="m">15:46</text><text x="433.3" y="990.5" class="m">15:52</text><text x="474.7" y="990.5" class="m">15:58</text><text x="516" y="990.5" class="m">16:04</text><text x="557.5" y="990.5" class="m">16:10</text></g>
<rect x="520" y="978" width="28" height="15" fill="#00c000"/><text x="524" y="990">11 E</text>

<!-- CHART 4 -->
<rect x="559" y="688" width="1" height="328" fill="#333"/>
<rect x="560" y="688" width="517" height="281" fill="#f4f4f4"/>
<rect x="1046" y="688" width="31" height="281" fill="#f6f6f6"/>
<rect x="560" y="969" width="517" height="21" fill="#f7f7f7"/>
<rect x="560" y="990" width="517" height="15" fill="#eee"/>
<rect x="1056" y="991" width="14" height="13" fill="url(#th)" stroke="#aaa"/>
<path d="M570 993l-4 4 4 4z" fill="#555"/>
<text x="566" y="701" textLength="177" lengthAdjust="spacingAndGlyphs">EMD-201403-GLOBEX  2 min   #13</text>
<rect x="746" y="689" width="49" height="14" fill="#000"/><text x="748" y="701" textLength="46" lengthAdjust="spacingAndGlyphs" class="w">C=1305.1</text>
<text x="800" y="701" textLength="25" lengthAdjust="spacingAndGlyphs">T=20</text>
<rect x="828" y="689" width="45.5" height="14" fill="#00c000"/><text x="830" y="701" textLength="43" lengthAdjust="spacingAndGlyphs" class="w">Chg=0.2</text>
<rect x="876" y="689" width="58" height="14" fill="#f00"/><text x="878" y="701" textLength="55" lengthAdjust="spacingAndGlyphs" class="w">DChg=-0.5</text>
<text x="938" y="701" textLength="108" lengthAdjust="spacingAndGlyphs">2014-02-10 15:58:38 l</text>

<g transform="translate(550,680) scale(.338,.3333)">
<rect x="520" y="490" width="33" height="105" fill="#e2e2e2"/><rect x="522" y="625" width="31" height="43" fill="#dcdcdc"/>
<path stroke="#e2e2e2" stroke-width="7" d="M503 297H553M200 323H553M110 337H553M48 350H553M80 362H553M38 375H553M40 390H553M100 405H553M34 420H553"/>
<path stroke="#c6c6c6" stroke-width="7" d="M240 420H553M34 432H553M34 445H553M100 458H553M100 470H553M34 482H553M300 495H553M400 510H553M385 527H553M420 540H553M460 555H553M420 570H553"/>
<path stroke="#e0e0e0" stroke-width="7" d="M420 585H553M520 630H553M470 645H553M520 660H553"/>
<path stroke="#c4c8f6" stroke-width="2" d="M435 338H553M435 365H553M420 582H553M525 630H553M525 655H553"/>
<rect x="34" y="476" width="519" height="11" fill="#f0a8e8" opacity=".8"/>
<rect x="1077" y="310" width="10" height="495" fill="#e2e2e2"/>
<path stroke="#bdbdbd" stroke-width="7" d="M1045 515H1087M1025 530H1087M1035 545H1087M1040 560H1087M1050 575H1087M1040 590H1087M1050 605H1087M1060 620H1087M1030 650H1087M1028 665H1087M1050 680H1087M1055 695H1087M1060 710H1087M1075 722H1087"/>
<rect x="1008" y="628" width="80" height="5" fill="#f0a0e8"/>
<path class="n" stroke="#000" stroke-width="1.5" stroke-dasharray="18 8" d="M575 311H1106M575 805H1106M40 380H575"/>
<path class="n" stroke="#000" stroke-width="1.2" d="M57 470V500M47 490H67M93 460V482M128 450V464M164 432V456M200 427V447M235 383V434M271 395V460M306 427V434M341 406V428M377 395V420M412 395V407M448 414V500M483 463V476M519 427V476M555 323V434M540 380H570M590 310V548M625 441V555M661 441V670M696 618V790M732 597V805M767 620V726M803 556V720M838 490V603M874 516V585M909 495V575M899 544H919M945 468V590M980 510V632M1016 495V585M1006 502H1026M1051 378V543M1087 350V406"/>
<path class="c" d="M84 464h18v18h-18zM119 454h18v10h-18zM155 441h18v15h-18zM191 427h18v6h-18zM226 395h18v39h-18zM297 427h18v7h-18zM332 406h18v22h-18zM368 395h18v12h-18zM510 433h18v43h-18zM546 352h18v82h-18zM616 455h18v41h-18zM723 625h18v165h-18zM794 570h18v98h-18zM829 530h18v48h-18zM971 524h18v81h-18zM1042 421h18v82h-18zM1078 406h18v16h-18z" style="fill:#7fe000"/>
<path class="c" d="M262 395h18v39h-18zM403 395h18v12h-18zM439 421h18v55h-18zM474 463h18v13h-18zM581 310h18v198h-18zM652 455h18v213h-18zM687 646h18v144h-18zM758 620h18v48h-18zM865 544h18v6h-18zM936 517h18v55h-18z" style="fill:#f00000"/>
<path class="n" stroke="#00e000" stroke-width="1" stroke-dasharray="22 6" d="M100 382L130 394H175L200 406 230 394H530L550 385 590 320M575 470L625 495M770 311L785 375 800 450 812 490 840 495 900 507 960 512 1000 517 1050 510H1080"/>
<path class="n" stroke="#0000e0" stroke-width="1.2" d="M57 490V463H220L290 458H520L560 445 600 465 645 470 700 547 800 563 1020 556 1050 550H1088"/>
<path class="n" stroke="#0000e0" stroke-width="1" stroke-dasharray="22 6" d="M57 490L100 482H550M570 410L590 315M770 311L790 480 805 635H985M1010 632H1088"/>
<path class="n" stroke="#f00000" stroke-width="1" stroke-dasharray="22 6" d="M57 619H107M127 619H168L178 630M190 652L205 667H240L248 640 267 595 280 575 330 571H420L465 562 520 545 555 538 580 455 640 515 670 530 695 620 745 645 770 670 797 707M804 727H1075"/>
</g>
<text x="1019" y="787" textLength="24" lengthAdjust="spacingAndGlyphs">ORH</text><text x="1022" y="952" textLength="21" lengthAdjust="spacingAndGlyphs">ORL</text>
<g transform="translate(1050,0) scale(.87,1)"><text y="754">1308</text><text y="800">1306</text><text y="845">1304</text><text y="891">1302</text><text y="937">1300</text></g>
<rect x="1050" y="808" width="27" height="14" fill="#000"/><text x="1051" y="820" textLength="24" lengthAdjust="spacingAndGlyphs" class="w">1305</text>
<g transform="scale(.87,1)" class="m"><text x="658" y="985.5" class="m">5:00</text><text x="695" y="985.5" class="m">15:06</text><text x="737" y="985.5" class="m">15:12</text><text x="778" y="985.5" class="m">15:18</text><text x="819.5" y="985.5" class="m">15:24</text><text x="861" y="985.5" class="m">15:30</text><text x="902.6" y="985.5" class="m">15:36</text><text x="944" y="985.5" class="m">15:42</text><text x="985" y="985.5" class="m">15:48</text><text x="1026.4" y="985.5" class="m">15:54</text><text x="1068" y="985.5" class="m">16:00</text><text x="1109" y="985.5" class="m">16:06</text><text x="1151" y="985.5" class="m">16:12</text></g>
<rect x="1061" y="973" width="16" height="15" fill="#00c000"/><text x="1063" y="985">11</text>

<!-- ORDERFLOW -->
<rect x="1085" y="154" width="833" height="831" fill="#004b96"/>
<rect x="1090" y="221.5" width="630" height="530" fill="#22558f"/>
<rect x="1087" y="157" width="121" height="13" fill="#0a74b8"/><rect x="1087" y="170" width="43" height="14" fill="#0a74b8"/>
<text x="1089" y="168" textLength="118" lengthAdjust="spacingAndGlyphs" class="w">[Sim]  Trade: 2@15743</text>
<text x="1089" y="182" textLength="40" lengthAdjust="spacingAndGlyphs" class="w">DPL: 0P</text>
<text x="1211" y="168" textLength="214" lengthAdjust="spacingAndGlyphs" class="w">Sim Fills  YM-201403-ECBOT  2 min   #17</text>
<rect x="1428" y="155" width="46" height="15" fill="#fff"/><text x="1430" y="168" textLength="43" lengthAdjust="spacingAndGlyphs" style="fill:#0050a0">C=15721</text>
<text x="1479" y="168" textLength="26" lengthAdjust="spacingAndGlyphs" class="w">T=92</text>
<rect x="1507" y="155" width="41" height="15" fill="#f00"/><text x="1509" y="168" textLength="38" lengthAdjust="spacingAndGlyphs" style="fill:#a01030">Chg=-4</text>
<rect x="1551" y="155" width="55" height="15" fill="#f00"/><text x="1553" y="168" textLength="52" lengthAdjust="spacingAndGlyphs" style="fill:#a01030">DChg=-18</text>
<text x="1610" y="168" textLength="199" lengthAdjust="spacingAndGlyphs" class="w">2014-02-10 15:58:39 H=15728 L=15721</text>
<text x="1812" y="168" textLength="20" lengthAdjust="spacingAndGlyphs" style="fill:#00a000">Buy</text>
<text x="1891" y="168" textLength="19" lengthAdjust="spacingAndGlyphs" style="fill:#e00020">Sell</text>
<path d="M1808.5 155V752M1837.5 155V752" stroke="#00a000"/><path d="M1887 155V752M1917 155V752" stroke="#e00000"/>

<g transform="translate(1080,180) scale(.3333,.37)">
<path class="n" stroke="#000" stroke-width="1.5" stroke-dasharray="11 5" d="M110 112H1920"/>
<path class="n" stroke="#00f000" stroke-width="1" stroke-dasharray="20 5" d="M123 688H330L600 580 700 540 880 508 915 485 1060 365H1827"/>
<path class="n" stroke="#80f0f0" stroke-width="1" stroke-dasharray="20 5" d="M123 1047H1073L1260 835 1290 830H1827"/>
<path class="n" stroke="#f00000" stroke-width="1" stroke-dasharray="30 4" d="M123 1265H500L690 1225 883 1265 1070 1190 1260 1155 1440 1120H1827"/>
<path class="n" stroke="#000080" stroke-width="1.8" d="M123 911L1250 856 1830 848"/>
<path stroke="#78c41e" stroke-width="15" stroke-dasharray="32 4" d="M226 560V1025M415 522V592M604 452V592M793 308V520M1550 560V700"/>
<path stroke="#e02020" stroke-width="15" stroke-dasharray="32 4" d="M37 885V990M982 236V556M1171 560V700M1361 630V735M1739 595V735"/>
<path stroke="#d8e0e8" stroke-width="3" d="M137 812V1312M328 490V1420M515 310V810M704 238V700M893 92V592M1082 130V702M1270 562V962M1459 453V990M1648 272V918M1837 453V745"/>

<rect x="20" y="95" width="90" height="30" fill="#004b96"/><text x="24" y="122" style="font-size:36px">ORH</text>
<rect x="20" y="343" width="88" height="37" fill="#004b96"/><text x="24" y="374" style="font-size:36px;fill:#00d040">VAH</text>
<rect x="20" y="810" width="88" height="38" fill="#004b96"/><text x="24" y="842" style="font-size:36px;fill:#90f0f0">POC</text>
<rect x="20" y="1098" width="78" height="39" fill="#004b96"/><text x="24" y="1131" style="font-size:36px;fill:#e02030">VAL</text>

<g class="f fr">
<text x="132" y="842">0</text><text x="132" y="877">7</text><text x="132" y="914">0</text><text x="132" y="950">143</text><text x="132" y="985">52</text><text x="132" y="1023">61</text><text x="132" y="1058">278</text><text x="132" y="1093">72</text><text x="132" y="1131">27</text><text x="132" y="1166">7</text><text x="132" y="1201">39</text><text x="132" y="1237">1</text><text x="132" y="1274">0</text><text x="132" y="1309">5</text>
<text x="323" y="518">2</text><text x="323" y="553">2</text><text x="323" y="590">13</text><text x="323" y="625">0</text><text x="323" y="661">0</text><text x="323" y="698">0</text><text x="323" y="734">155</text><text x="323" y="769">13</text><text x="323" y="807">26</text><text x="323" y="842">38</text><text x="323" y="877">22</text><text x="323" y="914">45</text><text x="323" y="950">33</text><text x="323" y="985">96</text><text x="323" y="1023">61</text><text x="323" y="1058">18</text><text x="323" y="1093">61</text><text x="323" y="1131">25</text><text x="323" y="1166">3</text><text x="323" y="1201">6</text><text x="323" y="1237">206</text><text x="323" y="1274">19</text><text x="323" y="1309">10</text><text x="323" y="1345">14</text><text x="323" y="1382">18</text><text x="323" y="1418">23</text>
<text x="510" y="339">0</text><text x="510" y="374">25</text><text x="510" y="410">166</text><text x="510" y="445">38</text><text x="510" y="482">67</text><text x="510" y="518">31</text><text x="510" y="553">50</text><text x="510" y="590">13</text><text x="510" y="625">6</text><text x="510" y="661">26</text><text x="510" y="698">242</text><text x="510" y="734">45</text><text x="510" y="769">7</text><text x="510" y="807">18</text>
<text x="699" y="590">19</text><text x="699" y="625">4</text><text x="699" y="661">59</text><text x="699" y="698">8</text>
</g>
<g class="f fg">
<text x="148" y="842">2</text><text x="148" y="877">21</text><text x="148" y="914">27</text><text x="148" y="950">6</text><text x="148" y="985">75</text><text x="148" y="1023">55</text><text x="148" y="1058">163</text><text x="148" y="1093">234</text><text x="148" y="1131">18</text><text x="148" y="1166">14</text><text x="148" y="1201">5</text><text x="148" y="1237">8</text><text x="148" y="1274">1</text><text x="148" y="1309">0</text>
<text x="338" y="518">15</text><text x="338" y="553">38</text><text x="338" y="590">0</text><text x="338" y="625">22</text><text x="338" y="661">5</text><text x="338" y="698">108</text><text x="338" y="734">10</text><text x="338" y="769">18</text><text x="338" y="807">16</text><text x="338" y="842">5</text><text x="338" y="877">17</text><text x="338" y="914">36</text><text x="338" y="950">33</text><text x="338" y="985">38</text><text x="338" y="1023">17</text><text x="338" y="1058">25</text><text x="338" y="1093">19</text><text x="338" y="1131">4</text><text x="338" y="1166">0</text><text x="338" y="1201">6</text><text x="338" y="1237">6</text><text x="338" y="1274">19</text><text x="338" y="1309">1</text><text x="338" y="1345">14</text><text x="338" y="1382">6</text><text x="338" y="1418">0</text>
<text x="526" y="339">7</text><text x="526" y="374">29</text><text x="526" y="410">41</text><text x="526" y="445">34</text><text x="526" y="482">198</text><text x="526" y="518">46</text><text x="526" y="553">1</text><text x="526" y="590">82</text><text x="526" y="625">144</text><text x="526" y="661">35</text><text x="526" y="698">20</text><text x="526" y="734">2</text><text x="526" y="769">3</text><text x="526" y="807">0</text>
<text x="715" y="590">0</text><text x="715" y="625">4</text><text x="715" y="661">38</text><text x="715" y="698">41</text>
</g>
<g class="f fr fz">
<text x="699 699 699 699 699 699 699 699 699" y="266 302 339 374 410 445 482 518 553">000000000</text>
<text x="888 888 888 888 888 888 888 888 888 888 888 888 888 888" y="121 158 194 230 266 302 339 374 410 445 482 518 553 590">00000000000000</text>
<text x="1077 1077 1077 1077 1077 1077 1077 1077 1077 1077 1077 1077 1077 1077 1077 1077" y="158 194 230 266 302 339 374 410 445 482 518 553 590 625 661 698">0000000000000000</text>
<text x="1265 1265 1265 1265 1265 1265 1265 1265 1265 1265 1265" y="590 625 661 698 734 769 807 842 877 914 950">00000000000</text>
<text x="1454 1454 1454 1454 1454 1454 1454 1454 1454 1454 1454 1454 1454 1454 1454" y="482 518 553 590 625 661 698 734 769 807 842 877 914 950 985">000000000000000</text>
<text x="1643 1643 1643 1643 1643 1643 1643 1643 1643 1643 1643 1643 1643 1643 1643 1643 1643 1643" y="302 339 374 410 445 482 518 553 590 625 661 698 734 769 807 842 877 914">000000000000000000</text>
<text x="1832" y="482">2</text><text x="1832" y="518">49</text><text x="1832" y="553">3</text><text x="1832" y="590">0</text><text x="1832" y="625">2</text><text x="1832" y="661">1</text><text x="1832" y="698">1</text><text x="1832" y="734">1</text>
</g>
<g class="f fg fy">
<text x="715 715 715 715 715 715 715 715 715" y="266 302 339 374 410 445 482 518 553">000000000</text>
<text x="904 904 904 904 904 904 904 904 904 904 904 904 904 904" y="121 158 194 230 266 302 339 374 410 445 482 518 553 590">00000000000000</text>
<text x="1093 1093 1093 1093 1093 1093 1093 1093 1093 1093 1093 1093 1093 1093 1093 1093" y="158 194 230 266 302 339 374 410 445 482 518 553 590 625 661 698">0000000000000000</text>
<text x="1281 1281 1281 1281 1281 1281 1281 1281 1281 1281 1281" y="590 625 661 698 734 769 807 842 877 914 950">00000000000</text>
<text x="1470 1470 1470 1470 1470 1470 1470 1470 1470 1470 1470 1470 1470 1470 1470" y="482 518 553 590 625 661 698 734 769 807 842 877 914 950 985">000000000000000</text>
<text x="1659 1659 1659 1659 1659 1659 1659 1659 1659 1659 1659 1659 1659 1659 1659 1659 1659 1659" y="302 339 374 410 445 482 518 553 590 625 661 698 734 769 807 842 877 914">000000000000000000</text>
<text x="1848" y="482">0</text><text x="1848" y="518">15</text><text x="1848" y="553">0</text><text x="1848" y="590">4</text><text x="1848" y="625">2</text><text x="1848" y="661">0</text><text x="1848" y="698">0</text><text x="1848" y="734">0</text>
</g>

<g fill="none" stroke="#e0dc20" stroke-width="4">
<rect x="55" y="1029" width="160" height="30"/><rect x="244" y="1208" width="160" height="31"/><rect x="433" y="453" width="160" height="30"/><rect x="622" y="632" width="160" height="31"/><rect x="811" y="416" width="160" height="31"/><rect x="1000" y="236" width="160" height="30"/><rect x="1189" y="669" width="160" height="30"/><rect x="1378" y="705" width="160" height="30"/><rect x="1567" y="632" width="160" height="31"/><rect x="1756" y="488" width="160" height="30"/>
</g>

<g fill="#6fb21e"><rect x="87" y="749" width="72" height="51"/><rect x="288" y="424" width="51" height="52"/><rect x="474" y="243" width="53" height="52"/><rect x="672" y="173" width="36" height="52"/><rect x="861" y="27" width="36" height="51"/><rect x="1050" y="65" width="36" height="51"/><rect x="1239" y="495" width="36" height="51"/><rect x="1428" y="387" width="36" height="51"/><rect x="1617" y="208" width="36" height="52"/><rect x="1800" y="387" width="51" height="51"/></g>
<g fill="#e02020"><rect x="96" y="1328" width="54" height="52"/><rect x="270" y="1436" width="87" height="51"/><rect x="460" y="825" width="86" height="51"/><rect x="663" y="716" width="54" height="52"/><rect x="861" y="608" width="36" height="52"/><rect x="1050" y="716" width="36" height="52"/><rect x="1239" y="968" width="36" height="52"/><rect x="1428" y="1006" width="36" height="51"/><rect x="1617" y="933" width="36" height="52"/><rect x="1800" y="752" width="51" height="51"/></g>
<g class="d">
<text x="123" y="788">260</text><text x="313" y="463">-2</text><text x="500" y="282">70</text><text x="690" y="212">0</text><text x="879" y="65">0</text><text x="1068" y="103">0</text><text x="1257" y="533">0</text><text x="1446" y="425">0</text><text x="1635" y="247">0</text><text x="1825" y="425">-9</text>
<text x="123" y="1367">61</text><text x="313" y="1474">-147</text><text x="503" y="863">-188</text><text x="690" y="755">71</text><text x="879" y="647">0</text><text x="1068" y="755">0</text><text x="1257" y="1007">0</text><text x="1446" y="1044">0</text><text x="1635" y="972">0</text><text x="1825" y="790">-1</text>
</g>
</g>

<g transform="translate(1500,180) scale(.3333,.37)">
<rect x="690" y="705" width="160" height="30" fill="#f00000" stroke="#ffff00" stroke-width="4"/>
<path stroke="#fff" stroke-width="3" d="M686 703V735"/>
<text x="772" y="738" style="font-size:34px;font-weight:bold;fill:#fff;text-anchor:middle">1|0</text>
<g class="ax"><text x="1085" y="51">15740</text><text x="1085" y="124">15738</text><text x="1085" y="195">15736</text><text x="1085" y="268">15734</text><text x="1085" y="341">15732</text><text x="1085" y="411">15730</text><text x="1085" y="484">15728</text><text x="1085" y="554">15726</text><text x="1085" y="627">15724</text><text x="1085" y="700">15722</text><text x="1085" y="770">15720</text><text x="1085" y="843">15718</text><text x="1085" y="916">15716</text><text x="1085" y="987">15714</text><text x="1085" y="1059">15712</text><text x="1085" y="1132">15710</text><text x="1085" y="1203">15708</text><text x="1085" y="1276">15706</text><text x="1085" y="1346">15704</text><text x="1085" y="1419">15702</text><text x="1085" y="1492">15700</text></g>
<rect x="1035" y="703" width="95" height="39" fill="#fff"/><text x="1083" y="735" style="font-size:33px;text-anchor:middle;fill:#0050a0">15721</text>
<g style="text-anchor:middle">
<text x="965" y="768" style="font-size:34px;fill:#60d020;text-anchor:middle">3</text><text x="965" y="806" style="font-size:34px;fill:#60d020;text-anchor:middle">29</text><text x="965" y="841" style="font-size:34px;fill:#60d020;text-anchor:middle">72</text><text x="965" y="876" style="font-size:34px;fill:#60d020;text-anchor:middle">65</text><text x="965" y="913" style="font-size:34px;fill:#60d020;text-anchor:middle">47</text><text x="965" y="949" style="font-size:34px;fill:#60d020;text-anchor:middle">51</text><text x="965" y="984" style="font-size:34px;fill:#60d020;text-anchor:middle">41</text><text x="965" y="1022" style="font-size:34px;fill:#60d020;text-anchor:middle">45</text><text x="965" y="1057" style="font-size:34px;fill:#60d020;text-anchor:middle">44</text><text x="965" y="1092" style="font-size:34px;fill:#60d020;text-anchor:middle">74</text><text x="965" y="1130" style="font-size:34px;fill:#fff;text-anchor:middle">471</text>
<text x="1199" y="373" style="font-size:34px;fill:#fff;text-anchor:middle">328</text><text x="1199" y="409" style="font-size:34px;fill:#e8202c;text-anchor:middle">41</text><text x="1199" y="444" style="font-size:34px;fill:#e8202c;text-anchor:middle">46</text><text x="1199" y="481" style="font-size:34px;fill:#e8202c;text-anchor:middle">34</text><text x="1199" y="517" style="font-size:34px;fill:#e8202c;text-anchor:middle">39</text><text x="1199" y="552" style="font-size:34px;fill:#e8202c;text-anchor:middle">31</text><text x="1199" y="589" style="font-size:34px;fill:#e8202c;text-anchor:middle">39</text><text x="1199" y="624" style="font-size:34px;fill:#e8202c;text-anchor:middle">28</text><text x="1199" y="660" style="font-size:34px;fill:#e8202c;text-anchor:middle">30</text><text x="1199" y="697" style="font-size:34px;fill:#e8202c;text-anchor:middle">34</text><text x="1199" y="733" style="font-size:34px;fill:#e8202c;text-anchor:middle">6</text>
</g>
</g>

<!-- Subgraph -->
<path d="M1086 752V965.5H1808.5V752" fill="none" stroke="#fff"/>
<path d="M1121 966v4M1184 966v4M1247 966v4M1310 966v4M1373 966v4M1436 966v4M1499 966v4M1562 966v4M1625 966v4M1688 966v4M1751 966v4M1809 786h4M1809 836h4" stroke="#fff"/>
<text x="1092" y="765" textLength="167" lengthAdjust="spacingAndGlyphs" class="w">Ask/Bid Volume Difference Bars</text>
<text x="1265" y="765" textLength="40" lengthAdjust="spacingAndGlyphs" style="fill:#00e040">Open: 0</text>
<text x="1312" y="765" textLength="43" lengthAdjust="spacingAndGlyphs" style="fill:#007a20">High: 16</text>
<text x="1362" y="765" textLength="45" lengthAdjust="spacingAndGlyphs" style="fill:#f00020">Low: -38</text>
<text x="1413" y="765" textLength="52" lengthAdjust="spacingAndGlyphs" style="fill:#a00020">Close: -38</text>
<text x="1474" y="765" textLength="8" lengthAdjust="spacingAndGlyphs" class="w">0</text>
<g transform="translate(1080,740) scale(.5357,.3333)">
<path class="n" stroke="#2060a8" stroke-width="1" d="M78 164V270"/>
<path class="n" stroke="#f00000" stroke-width="1.3" d="M195 298V327M312 88V221M1135 132V139"/>
<path class="n" stroke="#f00000" stroke-width="1.4" d="M42 139h71v25h-71zM160 142h71v156h-71zM277 139h72v37h-72zM1100 139h71v16h-71z" style="fill:#800000"/>
<path class="n" stroke="#00e000" stroke-width="1.3" d="M394 142H467M430 142V167M511 139H584M628 139H701M747 139H819M864 139H937M982 139H1055"/>
</g>
<text x="1811" y="790" textLength="7" lengthAdjust="spacingAndGlyphs" class="w">0</text>
<text x="1811" y="840" textLength="26" lengthAdjust="spacingAndGlyphs" class="w">-400</text>
<text x="1087" y="883" textLength="64" lengthAdjust="spacingAndGlyphs" style="fill:#60e000">AskV - BidV:</text>
<text x="1087" y="907" textLength="42" lengthAdjust="spacingAndGlyphs" class="w">Ask Vol:</text>
<text x="1087" y="931" textLength="40" lengthAdjust="spacingAndGlyphs" class="w">Bid Vol:</text>
<text x="1087" y="955" textLength="50" lengthAdjust="spacingAndGlyphs" class="w">Total Vol:</text>
<g transform="scale(.87,1)">
<text x="1433" y="883" class="m" style="fill:#ff1030">-92</text><text x="1505" y="883" class="m" style="fill:#ff1030">-7</text><text x="1578" y="883" class="m" style="fill:#d08000">0</text><text x="1651" y="883" class="m" style="fill:#d08000">0</text><text x="1723" y="883" class="m" style="fill:#d08000">0</text><text x="1795" y="883" class="m" style="fill:#d08000">0</text><text x="1868" y="883" class="m" style="fill:#d08000">0</text><text x="1940" y="883" class="m" style="fill:#ff1030">-38</text>
<text x="1433" y="907" class="m w">642</text><text x="1505" y="907" class="m w">83</text><text x="1578" y="907" class="m w">0</text><text x="1651" y="907" class="m w">0</text><text x="1723" y="907" class="m w">0</text><text x="1795" y="907" class="m w">0</text><text x="1868" y="907" class="m w">0</text><text x="1940" y="907" class="m w">21</text>
<text x="1433" y="931" class="m w">734</text><text x="1505" y="931" class="m w">90</text><text x="1578" y="931" class="m w">0</text><text x="1651" y="931" class="m w">0</text><text x="1723" y="931" class="m w">0</text><text x="1795" y="931" class="m w">0</text><text x="1868" y="931" class="m w">0</text><text x="1940" y="931" class="m w">59</text>
<text x="1433" y="955" class="m w">1376</text><text x="1505" y="955" class="m w">945</text><text x="1578" y="955" class="m w">931</text><text x="1651" y="955" class="m w">831</text><text x="1723" y="955" class="m w">1119</text><text x="1795" y="955" class="m w">611</text><text x="1868" y="955" class="m w">607</text><text x="1940" y="955" class="m w">163</text>
<text x="1288" y="981.5" class="m w">15:40</text><text x="1361" y="981.5" class="m w">15:42</text><text x="1433" y="981.5" class="m w">15:44</text><text x="1505" y="981.5" class="m w">15:46</text><text x="1578" y="981.5" class="m w">15:48</text><text x="1651" y="981.5" class="m w">15:50</text><text x="1723" y="981.5" class="m w">15:52</text><text x="1795" y="981.5" class="m w">15:54</text><text x="1868" y="981.5" class="m w">15:56</text><text x="1940" y="981.5" class="m w">15:58</text><text x="2013" y="981.5" class="m w">16:00</text>
</g>
<rect x="1879" y="969" width="37" height="15" fill="#00b020"/><text x="1882" y="981" textLength="31" lengthAdjust="spacingAndGlyphs" style="fill:#c0ffc0">62 L E</text>
<rect x="1085" y="985" width="833" height="18" fill="#eee"/>
<rect x="1884" y="986" width="14" height="15" fill="url(#th)" stroke="#aaa"/>
<path d="M1095 990l-4 4 4 4zM1907 990l4 4-4 4z" fill="#555"/>

<!-- Bottom tabs -->
<rect y="1012" width="1920" height="2" fill="#46b4e4"/>
<rect y="1014" width="1920" height="2.5" fill="#111"/>
<rect y="1016.5" width="1920" height="23.5" fill="#f0f0f0"/>
<g fill="#f2f2f2" stroke="#777">
<rect x="3" y="1018" width="179" height="18"/><rect x="185" y="1018" width="157" height="18"/><rect x="345" y="1018" width="182" height="18"/><rect x="530" y="1018" width="185" height="18"/><rect x="717" y="1018" width="162" height="18"/><rect x="882" y="1018" width="98" height="18"/><rect x="983" y="1018" width="197" height="18"/><rect x="1183" y="1018" width="185" height="18"/><rect x="1370" y="1018" width="169" height="18"/><rect x="1624" y="1018" width="76" height="18"/>
</g>
<rect x="1541" y="1017" width="81" height="21" fill="#3399ff"/>
<g>
<text x="10" y="1031" textLength="168" lengthAdjust="spacingAndGlyphs">YM-201403-ECBOT  2 min   #1   L:1</text>
<text x="190" y="1031" textLength="148" lengthAdjust="spacingAndGlyphs">YM-201403-ECBOT  1 day   #3</text>
<text x="350" y="1031" textLength="173" lengthAdjust="spacingAndGlyphs">ES-201403-GLOBEX  2 min   #4   L:1</text>
<text x="535" y="1031" textLength="176" lengthAdjust="spacingAndGlyphs">NQ-201403-GLOBEX  2 min   #5   L:1</text>
<text x="722" y="1031" textLength="153" lengthAdjust="spacingAndGlyphs">ES-201403-GLOBEX  1 day   #9</text>
<text x="887" y="1031" textLength="89" lengthAdjust="spacingAndGlyphs">$TICK  2 min   #12</text>
<text x="988" y="1031" textLength="188" lengthAdjust="spacingAndGlyphs">EMD-201403-GLOBEX  2 min   #13  L:1</text>
<text x="1189" y="1031" textLength="174" lengthAdjust="spacingAndGlyphs">EMD-201403-GLOBEX  30 min   #14</text>
<text x="1375" y="1031" textLength="159" lengthAdjust="spacingAndGlyphs">NQ-201403-GLOBEX  1 day   #16</text>
<text x="1547" y="1034" textLength="68" lengthAdjust="spacingAndGlyphs" class="w">Orderflow_YM</text>
<text x="1627" y="1031" textLength="69" lengthAdjust="spacingAndGlyphs">Orderflow_NQ</text>
</g>
</svg>
</body></html>
